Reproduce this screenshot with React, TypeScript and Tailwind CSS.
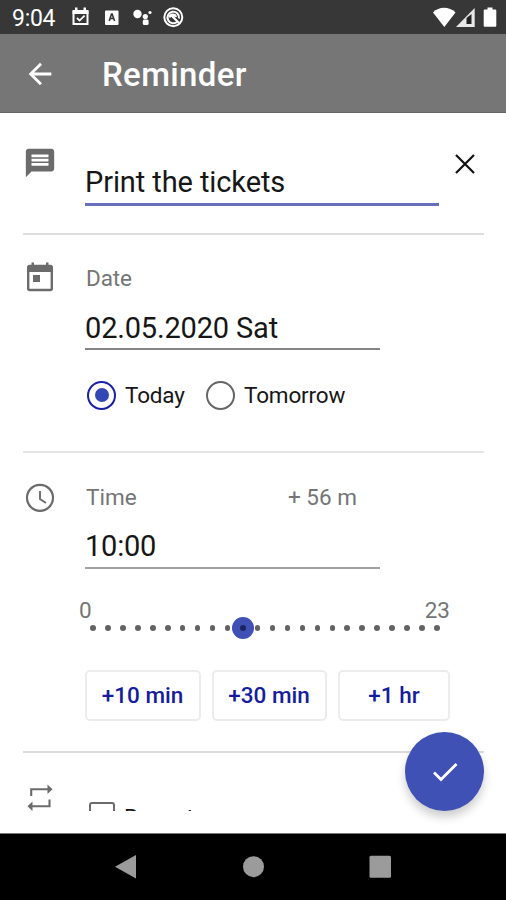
import type { ReactNode } from "react";
import { MdArrowBack, MdMessage } from "react-icons/md";

const hours = Array.from({ length: 24 }, (_, i) => i);

function Section({ icon, className, children }: { icon: ReactNode; className: string; children: ReactNode }) {
  return (
    <section className={`mx-[23px] flex w-[461px] shrink-0 items-start ${className}`}>
      <div className="flex w-[62px] shrink-0 text-[#6b6b6b]">{icon}</div>
      <div className="flex grow flex-col items-start">{children}</div>
    </section>
  );
}

function StatusBar() {
  return (
    <div className="flex h-[34px] shrink-0 items-center bg-[#373737] pr-[9px] pl-3 text-white">
      <span className="w-[60px] pt-[3px] text-[23px] leading-[31px] tracking-[-0.3px]">9:04</span>
      <svg className="h-[34px] w-[120px]" viewBox="72 0 120 34" fill="none">
        <path d="M73.500 12h14v12h-14z" stroke="#fff" strokeWidth="2" />
        <path d="M72.500 10h16v4h-16zM75 7.500h2.500V11H75zM83.500 7.500h2.500V11h-2.500z" fill="#fff" />
        <path d="m77 18 2.600 2.600 5-5" stroke="#fff" strokeWidth="1.800" />
        <rect x="105" y="10.500" width="13.500" height="14.500" rx="1" fill="#fff" />
        <path d="m109.200 21 2.300-7h.6l2.500 7M110 18.500h4" stroke="#373737" strokeWidth="1.600" />
        <g fill="#fff">
          <circle cx="137.500" cy="14" r="4.200" />
          <circle cx="145.300" cy="16.500" r="2.600" />
          <circle cx="150" cy="12.500" r="1.600" />
          <rect x="142.800" y="19.500" width="5.800" height="5.500" rx="1.500" />
        </g>
        <circle cx="173.300" cy="17.200" r="9" stroke="#fff" strokeWidth="2" />
        <path d="M177.500 21.500a5.800 5.800 0 1 1 1.500-3" stroke="#fff" strokeWidth="2" />
        <path d="m171 15 8 8M169.500 17.500c.5-3.800 5.500-3.800 6.500-.5" stroke="#fff" strokeWidth="2.200" />
      </svg>
      <svg className="ml-auto h-[34px] w-[66px]" viewBox="431 0 66 34" fill="none">
        <path d="M433 12.500c6-6.200 16-6.200 22.500 0L444.300 27z" fill="#fff" />
        <path d="M456 27 474.700 8v19z" fill="#e8e8e8" />
        <path d="M466.500 24v-6l5-4v10z" fill="#222" />
        <path d="M487.500 7.500h5v2h2.500c.8 0 1.300.5 1.300 1.300V25.500c0 .8-.5 1.300-1.300 1.300h-10c-.8 0-1.300-.5-1.300-1.300V10.800c0-.8.500-1.300 1.300-1.300h2.500z" fill="#fff" />
      </svg>
    </div>
  );
}

export default function App() {
  return (
    <div className="flex h-[900px] w-[506px] flex-col overflow-hidden bg-white font-['Roboto',sans-serif] text-[#161616]">
      <StatusBar />
      <header className="flex h-[79px] shrink-0 items-center border-b border-[#656565] bg-[#767676] pt-[2px] pl-[23px] text-white">
        <MdArrowBack className="size-[34px]" />
        <h1 className="mt-[2px] ml-[45px] text-[33px] leading-[40px] font-medium tracking-[0.350px]">Reminder</h1>
      </header>

      <div className="relative flex h-[720px] shrink-0 flex-col pb-[22px]">
        <main className="flex min-h-0 grow flex-col overflow-hidden">
          <Section className="h-[122px] border-b-2 border-[#dedede] pt-[33px]" icon={<MdMessage className="size-[34px]" />}>
            <div className="flex w-full justify-between">
              <div className="mt-[16px] h-[44px] w-[354px] border-b-[3px] border-[#6870bd] text-[29px] leading-[41px] tracking-[-0.1px]">Print the tickets</div>
              <svg className="mt-[8px] mr-[9px] size-5" viewBox="0 0 20 20" fill="none" stroke="#111" strokeWidth="2.200">
                <path d="m1 1 18 18M19 1 1 19" />
              </svg>
            </div>
          </Section>

          <Section
            className="h-[218px] border-b-2 border-[#e4e4e4] pt-[26px]"
            icon={
              <svg className="size-[34px]" viewBox="0 0 34 34" fill="none">
                <rect x="5.200" y="5" width="23.600" height="24" rx="1.500" stroke="currentColor" strokeWidth="2.400" />
                <path d="M5 4h24v7H5zM8.500 1.500H11V6H8.500zM23 1.500h2.500V6H23zM10 14h7v7h-7z" fill="currentColor" />
              </svg>
            }
          >
            <div className="mt-[3px] ml-[1px] text-[22.500px] leading-[28px] tracking-[-0.1px] text-[#757575]">Date</div>
            <div className="mt-[15px] h-[43px] w-[295px] border-b-2 border-[#858585] text-[29px] leading-[42px] tracking-[-0.170px]">02.05.2020 Sat</div>
            <div className="mt-[29px] flex h-8 items-center text-[22.500px] tracking-[-0.170px]">
              <span className="ml-[2px] flex size-[29px] items-center justify-center rounded-full border-2 border-[#1820a8]">
                <span className="size-[14px] rounded-full bg-[#3448b5]" />
              </span>
              <span className="mt-[2px] ml-[9px] w-[81px]">Today</span>
              <span className="size-[29px] rounded-full border-2 border-[#666]" />
              <span className="mt-[2px] ml-[9px]">Tomorrow</span>
            </div>
          </Section>

          <Section
            className="h-[300px] border-b-2 border-[#dcdcdc] pt-[28px]"
            icon={
              <svg className="size-[34px]" viewBox="0 0 34 34" fill="none" stroke="currentColor">
                <circle cx="17" cy="16.800" r="13" strokeWidth="2.200" />
                <path d="M17 10v8l6 4" strokeWidth="1.900" />
              </svg>
            }
          >
            <div className="ml-[1px] flex text-[22.500px] leading-[32px] text-[#757575]">
              <span className="w-[202px]">Time</span>
              <span>+ 56 m</span>
            </div>
            <div className="mt-[12px] h-[44px] w-[295px] border-b-2 border-[#a0a0a0] text-[29px] leading-[42px] tracking-[-0.2px]">10:00</div>
            <div className="mt-[28px] -ml-[6px] flex w-[371px] justify-between text-[22.500px] leading-[26px] text-[#757575]">
              <span>0</span>
              <span>23</span>
            </div>
            <div className="-mt-[6px] ml-[5px] flex h-[22px] w-[350px] items-center justify-between">
              {hours.map((hour) => (
                <span key={hour} className="flex w-[6px] shrink-0 items-center justify-center">
                  {hour === 10 ? (
                    <span className="flex size-[22px] shrink-0 items-center justify-center rounded-full bg-[#3f51b5]">
                      <span className="size-[6px] rounded-full bg-[#1c2560]" />
                    </span>
                  ) : (
                    <span className="size-[5.500px] rounded-full bg-[#636363]" />
                  )}
                </span>
              ))}
            </div>
            <div className="mt-[31px] flex gap-[11px] text-[22.500px] font-medium text-[#151d9e]">
              <button className="h-[51px] w-[116px] rounded-[5px] border-2 border-[#ececec] pt-px pr-px">+10 min</button>
              <button className="h-[51px] w-[115px] rounded-[5px] border-2 border-[#ececec] pt-px pr-px">+30 min</button>
              <button className="h-[51px] w-[112px] rounded-[5px] border-2 border-[#ececec] pt-px">+1 hr</button>
            </div>
          </Section>

          <Section
            className="h-[90px] pt-[28px]"
            icon={
              <svg className="size-[34px]" viewBox="23 781 34 34" fill="none">
                <path d="M31.200 796v-6.800H48M49.500 799.500v6.700H32" stroke="currentColor" strokeWidth="2.100" />
                <path d="m47.500 784.500 5 4.700-5 4.700zM32.500 801.500l-5 4.700 5 4.700z" fill="currentColor" />
              </svg>
            }
          >
            <div className="mt-[21px] ml-[4px] flex items-start text-[22.500px] leading-7">
              <span className="size-[26px] rounded-[3px] border-[2.500px] border-[#6b6b6b]" />
              <span className="mt-px ml-[9px]">Repeat</span>
            </div>
          </Section>
        </main>
        <button className="absolute top-[619px] left-[405px] flex size-[79px] items-center justify-center rounded-full bg-[#3f51b5] shadow-[0_6px_10px_rgba(0,0,0,0.2)]">
          <svg className="size-[34px]" viewBox="0 0 34 34" fill="none" stroke="#fff" strokeWidth="2.800">
            <path d="m6 17.500 7 7L28.500 9" />
          </svg>
        </button>
      </div>

      <nav className="flex h-[67px] shrink-0 items-center border-t border-[#777] bg-black">
        <svg className="h-[66px] w-full" viewBox="0 834 506 66" fill="#9b9b9b">
          <path d="M115 866.700 136 855v23.500z" />
          <circle cx="253.500" cy="866.700" r="10.500" />
          <rect x="369.500" y="855.700" width="21.500" height="22" rx="1.500" />
        </svg>
      </nav>
    </div>
  );
}
